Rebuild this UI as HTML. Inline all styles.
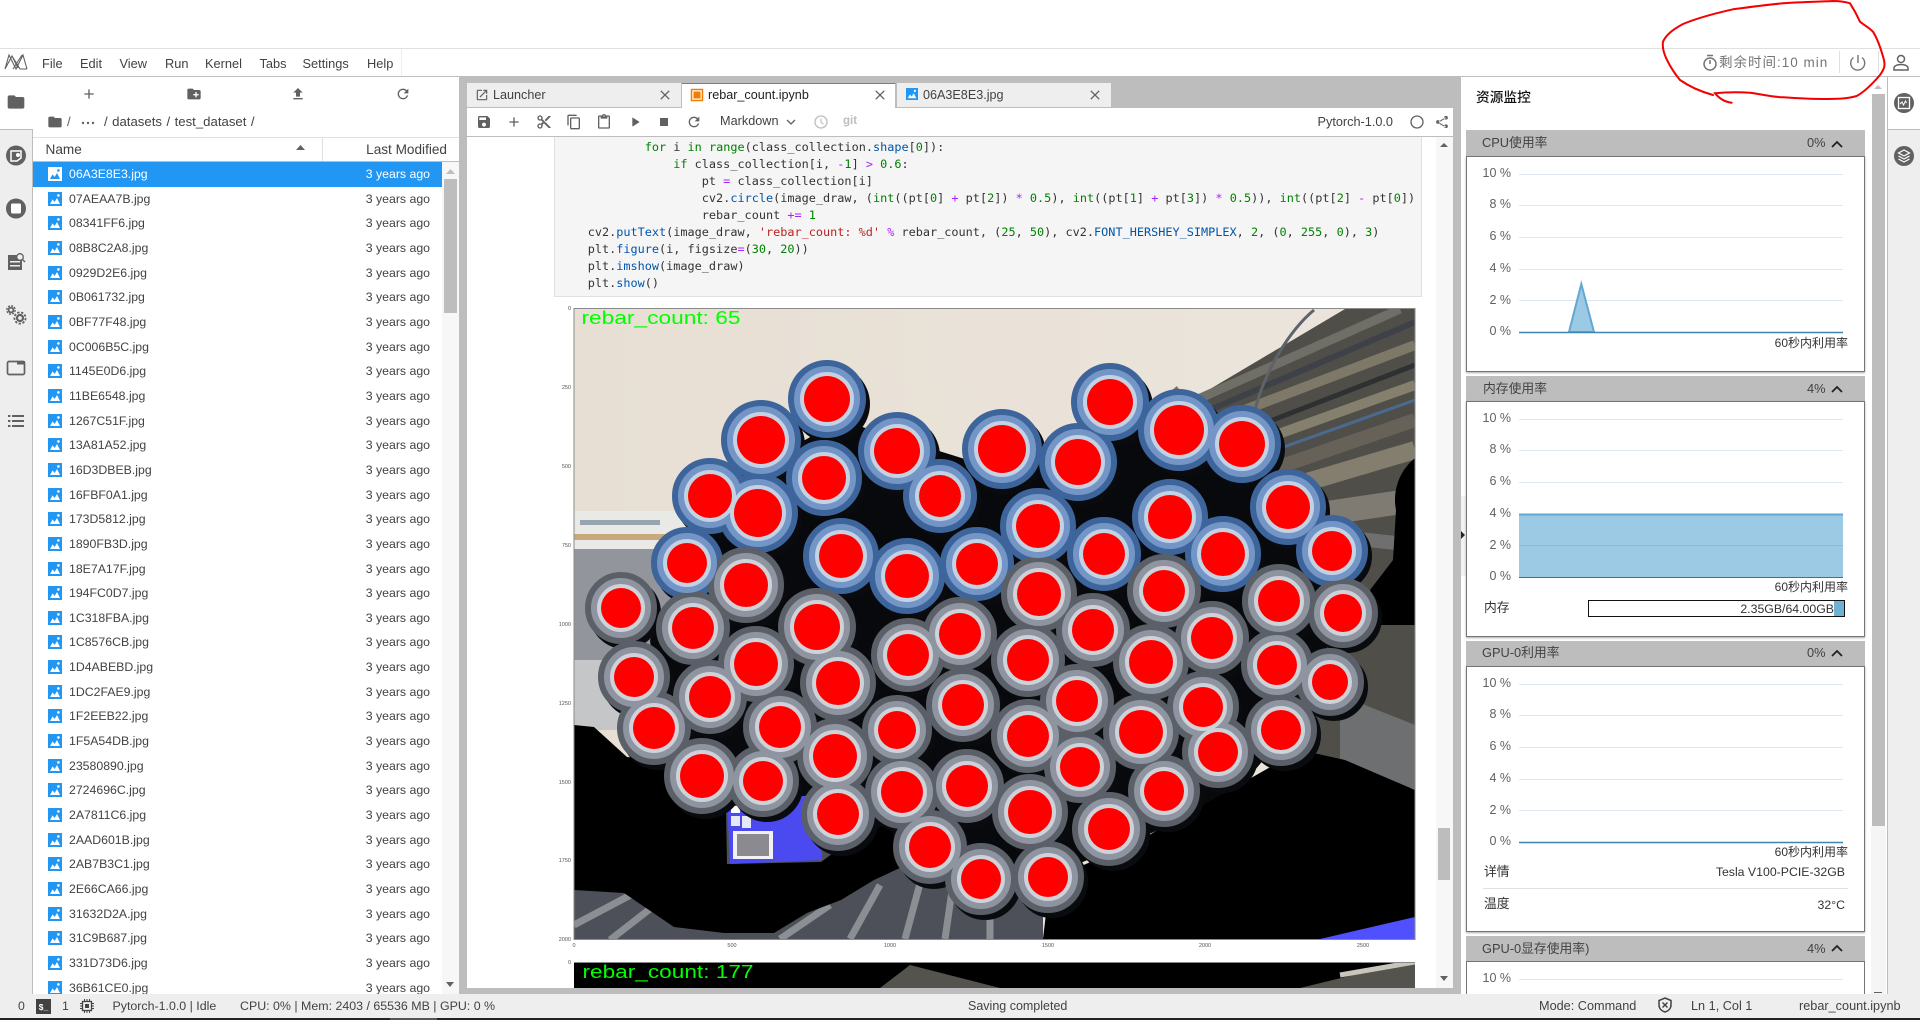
<!DOCTYPE html>
<html lang="en"><head><meta charset="utf-8"><title>rebar_count.ipynb</title>
<style>
html,body{margin:0;padding:0;background:#fff;overflow:hidden}
body{position:relative;width:1920px;height:1020px;overflow:hidden;font-family:"Liberation Sans","Noto Sans CJK SC",sans-serif;font-size:12.6px;color:#424242}
.a{position:absolute}
.t{position:absolute;white-space:nowrap;line-height:20px;height:20px}
.c{font-size:12.8px;color:#424242}
.y{font-size:12.5px;color:#616161;text-align:right;width:40px;left:1471px}
.u{font-size:12px;color:#333;right:72px}
#fl{position:absolute;left:33px;top:162px;width:409px;height:832px;overflow:hidden}
.r{position:relative;height:24.67px;line-height:24.67px;font-size:12.3px;color:#424242}
.r svg{position:absolute;left:15px;top:5px;width:14px;height:14px}
.r b{position:absolute;left:36px;font-weight:normal}
.r i{position:absolute;right:12px;font-style:normal;font-size:12.3px}
.s{background:#2196f3;color:#fff}
.s b,.s i{color:#fff}
#code{position:absolute;left:587.7px;top:139px;font:11.85px/17px "DejaVu Sans Mono","Liberation Mono",monospace;color:#333;white-space:pre;margin:0}
.k{color:#008000}.n{color:#008000}.o{color:#aa22ff}.f{color:#0055aa}.st{color:#ba2121}
</style></head><body>

<!-- top lines -->
<div class="a" style="left:0;top:48px;width:1920px;height:1px;background:#e0e0e0"></div>
<div class="a" style="left:0;top:76px;width:1920px;height:1px;background:#bdbdbd"></div>
<div class="a" style="left:401px;top:49px;width:1px;height:27px;background:#eee"></div>
<div class="a" style="left:1839px;top:51px;width:1px;height:22px;background:#e0e0e0"></div>
<div class="a" style="left:1878px;top:51px;width:1px;height:22px;background:#e0e0e0"></div>

<!-- left sidebar -->
<div class="a" style="left:0;top:129px;width:32px;height:865px;background:#eee;border-right:1px solid #bdbdbd;border-top:1px solid #bdbdbd"></div>
<!-- file browser chrome -->
<div class="a" style="left:33px;top:137px;width:426px;height:1px;background:#e0e0e0"></div>
<div class="a" style="left:33px;top:161px;width:426px;height:1px;background:#bdbdbd"></div>
<div class="a" style="left:322px;top:137px;width:1px;height:24px;background:#e0e0e0"></div>
<div class="a" style="left:442px;top:162px;width:17px;height:832px;background:#f7f7f7"></div>
<div class="a" style="left:444px;top:179px;width:13px;height:134px;background:#bdbdbd"></div>
<!-- splitters -->
<div class="a" style="left:459px;top:77px;width:1002px;height:6px;background:#bdbdbd"></div>
<div class="a" style="left:459px;top:77px;width:8px;height:917px;background:#bdbdbd"></div>
<div class="a" style="left:1453px;top:77px;width:8px;height:917px;background:#bdbdbd"></div>
<div class="a" style="left:467px;top:83px;width:986px;height:25px;background:#bdbdbd"></div>
<!-- tabs -->
<div class="a" style="left:467px;top:83px;width:214px;height:24px;background:#eee;border-right:1px solid #bdbdbd"></div>
<div class="a" style="left:682px;top:83px;width:214px;height:25px;background:#fff;border-top:1px solid #2196f3;box-sizing:border-box;border-right:1px solid #bdbdbd"></div>
<div class="a" style="left:897px;top:83px;width:214px;height:24px;background:#eee"></div>
<div class="a" style="left:467px;top:136px;width:986px;height:1px;background:#bdbdbd"></div>
<!-- code cell -->
<div class="a" style="left:554px;top:137px;width:866px;height:159px;background:#f5f5f5;border:1px solid #e0e0e0;border-top:0"></div>
<div class="a" style="left:1436px;top:137px;width:17px;height:851px;background:#f7f7f7"></div>
<div class="a" style="left:1438px;top:828px;width:12px;height:52px;background:#bdbdbd"></div>
<div class="a" style="left:467px;top:988px;width:986px;height:6px;background:#bdbdbd"></div>
<!-- right panel -->
<div class="a" style="left:1872px;top:94px;width:13px;height:732px;background:#bdbdbd"></div>
<div class="a" style="left:1871px;top:826px;width:15px;height:168px;background:#f5f5f5"></div>
<div class="a" style="left:1887px;top:77px;width:1px;height:917px;background:#bdbdbd"></div>
<div class="a" style="left:1888px;top:129px;width:32px;height:865px;background:#eee;border-top:1px solid #bdbdbd"></div>
<div class="a" style="left:1461px;top:496px;width:5px;height:80px;background:#f2f2f2"></div>

<!-- cards -->
<div class="a" style="left:1466px;top:130px;width:399px;height:26px;background:#bdbdbd"></div>
<div class="a" style="left:1466px;top:156px;width:397px;height:214px;background:#fff;border:1px solid #757575;box-shadow:0 1px 2px #aaa"></div>
<div class="a" style="left:1466px;top:376px;width:399px;height:26px;background:#bdbdbd"></div>
<div class="a" style="left:1466px;top:401px;width:397px;height:234px;background:#fff;border:1px solid #757575;box-shadow:0 1px 2px #aaa"></div>
<div class="a" style="left:1466px;top:641px;width:399px;height:25px;background:#bdbdbd"></div>
<div class="a" style="left:1466px;top:666px;width:397px;height:264px;background:#fff;border:1px solid #757575;box-shadow:0 1px 2px #aaa"></div>
<div class="a" style="left:1466px;top:936px;width:399px;height:26px;background:#bdbdbd"></div>
<div class="a" style="left:1466px;top:961px;width:397px;height:50px;background:#fff;border:1px solid #757575"></div>
<div class="a" style="left:1588px;top:600px;width:255px;height:15px;border:1px solid #111;background:#fff"></div>
<div class="a" style="left:1834px;top:601px;width:10px;height:15px;background:#6fb0d5"></div>
<div class="a" style="left:1483px;top:888px;width:365px;height:1px;background:#e0e0e0"></div>

<!-- overlay drawing -->
<svg class="a" style="left:0;top:0" width="1920" height="1020" viewBox="0 0 1920 1020" xmlns="http://www.w3.org/2000/svg">
<defs>
<clipPath id="ci"><rect x="574" y="309" width="841" height="630"/></clipPath>
<clipPath id="ci2"><rect x="574" y="963" width="841" height="25"/></clipPath>
<symbol id="folder" viewBox="0 0 24 24"><path d="M10 4H4c-1.1 0-2 .9-2 2v12c0 1.1.9 2 2 2h16c1.1 0 2-.9 2-2V8c0-1.1-.9-2-2-2h-8l-2-2z"/></symbol>
<symbol id="nf" viewBox="0 0 24 24"><path fill-rule="evenodd" d="M20 6h-8l-2-2H4c-1.1 0-2 .9-2 2v12c0 1.1.9 2 2 2h16c1.1 0 2-.9 2-2V8c0-1.1-.9-2-2-2zm-1 8h-3v3h-2v-3h-3v-2h3V9h2v3h3v2z"/></symbol>
<symbol id="up" viewBox="0 0 24 24"><path d="M9 16h6v-6h4l-7-7-7 7h4zm-4 2h14v2H5z"/></symbol>
<symbol id="ref" viewBox="0 0 24 24"><path d="M17.65 6.35A7.958 7.958 0 0012 4c-4.42 0-7.99 3.58-7.99 8s3.57 8 7.99 8c3.73 0 6.84-2.55 7.73-6h-2.08A5.99 5.99 0 0112 18c-3.31 0-6-2.69-6-6s2.69-6 6-6c1.66 0 3.14.69 4.22 1.78L13 11h7V4l-2.35 2.35z"/></symbol>
<symbol id="save" viewBox="0 0 24 24"><path d="M17 3H5a2 2 0 00-2 2v14c0 1.1.89 2 2 2h14c1.1 0 2-.9 2-2V7l-4-4zm-5 16c-1.66 0-3-1.34-3-3s1.34-3 3-3 3 1.34 3 3-1.34 3-3 3zm3-10H5V5h10v4z"/></symbol>
<symbol id="add" viewBox="0 0 24 24"><path d="M19 13h-6v6h-2v-6H5v-2h6V5h2v6h6v2z"/></symbol>
<symbol id="cut" viewBox="0 0 24 24"><path d="M9.64 7.64c.23-.5.36-1.05.36-1.64 0-2.21-1.79-4-4-4S2 3.79 2 6s1.79 4 4 4c.59 0 1.14-.13 1.64-.36L10 12l-2.36 2.36C7.14 14.13 6.59 14 6 14c-2.21 0-4 1.79-4 4s1.79 4 4 4 4-1.79 4-4c0-.59-.13-1.14-.36-1.64L12 14l7 7h3v-1L9.64 7.64zM6 8c-1.1 0-2-.89-2-2s.9-2 2-2 2 .89 2 2-.9 2-2 2zm0 12c-1.1 0-2-.89-2-2s.9-2 2-2 2 .89 2 2-.9 2-2 2zm6-7.5c-.28 0-.5-.22-.5-.5s.22-.5.5-.5.5.22.5.5-.22.5-.5.5zM19 3l-6 6 2 2 7-7V3z"/></symbol>
<symbol id="copy" viewBox="0 0 24 24"><path d="M16 1H4c-1.1 0-2 .9-2 2v14h2V3h12V1zm3 4H8c-1.1 0-2 .9-2 2v14c0 1.1.9 2 2 2h11c1.1 0 2-.9 2-2V7c0-1.1-.9-2-2-2zm0 16H8V7h11v14z"/></symbol>
<symbol id="paste" viewBox="0 0 24 24"><path d="M19 2h-4.18C14.4.84 13.3 0 12 0c-1.3 0-2.4.84-2.82 2H5c-1.1 0-2 .9-2 2v16c0 1.1.9 2 2 2h14c1.1 0 2-.9 2-2V4c0-1.1-.9-2-2-2zm-7 0c.55 0 1 .45 1 1s-.45 1-1 1-1-.45-1-1 .45-1 1-1zm7 18H5V4h2v3h10V4h2v16z"/></symbol>
<symbol id="run" viewBox="0 0 24 24"><path d="M8 5v14l11-7z"/></symbol>
<symbol id="stop" viewBox="0 0 24 24"><path d="M6 6h12v12H6z"/></symbol>
<symbol id="share" viewBox="0 0 24 24"><path d="M6 9.2a2.8 2.8 0 100 5.6 2.8 2.8 0 000-5.6zm12-6.4a2.8 2.8 0 100 5.6 2.8 2.8 0 000-5.6zm0 12.8a2.8 2.8 0 100 5.6 2.8 2.8 0 000-5.6zM7 11l10-6 .8 1.3-10 6zm.8 1.7l10 6-.8 1.3-10-6z"/></symbol>
<symbol id="close" viewBox="0 0 24 24"><path d="M19 6.4L17.6 5 12 10.6 6.4 5 5 6.4 10.6 12 5 17.6 6.4 19 12 13.4 17.6 19 19 17.6 13.4 12z"/></symbol>
<symbol id="launch" viewBox="0 0 24 24"><path d="M19 19H5V5h7V3H5a2 2 0 00-2 2v14a2 2 0 002 2h14c1.1 0 2-.9 2-2v-7h-2v7zM14 3v2h3.59l-9.83 9.83 1.41 1.41L19 6.41V10h2V3h-7z"/></symbol>
<symbol id="im" viewBox="0 0 14 14"><path fill="#2196f3" d="M0 0h14v14H0z"/><path fill="#fff" d="M2 12l2.6-4.6 2 2.6 2.4-4 3 6z"/><circle cx="10.4" cy="3.4" r="1.3" fill="#fff"/></symbol>
<g id="ca">
<circle cx="827" cy="399" r="23"/><circle cx="761" cy="440" r="24"/><circle cx="897" cy="451" r="23"/><circle cx="1002" cy="449" r="24"/><circle cx="1110" cy="402" r="23"/><circle cx="1179" cy="430" r="25"/><circle cx="1242" cy="444" r="23"/><circle cx="1078" cy="462" r="23"/><circle cx="824" cy="478" r="22"/><circle cx="710" cy="496" r="22"/><circle cx="940" cy="496" r="21"/><circle cx="758" cy="513" r="24"/><circle cx="1038" cy="526" r="22"/><circle cx="1170" cy="517" r="22"/><circle cx="1288" cy="507" r="22"/><circle cx="841" cy="556" r="22"/><circle cx="687" cy="563" r="20"/><circle cx="907" cy="576" r="22"/><circle cx="977" cy="564" r="21"/><circle cx="1104" cy="554" r="21"/><circle cx="1223" cy="554" r="22"/><circle cx="1332" cy="551" r="20"/>
</g>
<g id="cb">
<circle cx="746" cy="585" r="22"/><circle cx="1039" cy="594" r="22"/><circle cx="1164" cy="591" r="21"/><circle cx="1279" cy="601" r="21"/><circle cx="621" cy="608" r="20"/><circle cx="817" cy="627" r="23"/><circle cx="960" cy="634" r="21"/><circle cx="1093" cy="630" r="21"/><circle cx="1343" cy="613" r="19"/><circle cx="693" cy="628" r="21"/><circle cx="1212" cy="638" r="21"/><circle cx="908" cy="655" r="21"/><circle cx="756" cy="664" r="22"/><circle cx="1028" cy="660" r="21"/><circle cx="1151" cy="662" r="22"/><circle cx="1277" cy="665" r="20"/><circle cx="634" cy="677" r="20"/><circle cx="1330" cy="682" r="18"/><circle cx="838" cy="683" r="22"/><circle cx="710" cy="697" r="21"/><circle cx="1077" cy="701" r="21"/><circle cx="963" cy="705" r="21"/><circle cx="1203" cy="707" r="20"/><circle cx="654" cy="728" r="21"/><circle cx="780" cy="727" r="21"/><circle cx="897" cy="730" r="19"/><circle cx="1028" cy="736" r="21"/><circle cx="1141" cy="732" r="22"/><circle cx="1281" cy="730" r="20"/><circle cx="835" cy="756" r="22"/><circle cx="1218" cy="752" r="20"/><circle cx="702" cy="776" r="22"/><circle cx="763" cy="781" r="20"/><circle cx="1080" cy="767" r="20"/><circle cx="967" cy="786" r="21"/><circle cx="902" cy="792" r="21"/><circle cx="1164" cy="791" r="20"/><circle cx="1030" cy="812" r="22"/><circle cx="838" cy="814" r="21"/><circle cx="1109" cy="829" r="21"/><circle cx="930" cy="847" r="21"/><circle cx="1048" cy="877" r="20"/><circle cx="981" cy="879" r="20"/>
</g>
<linearGradient id="sand" x1="0" y1="0" x2="1" y2="0"><stop offset="0" stop-color="#e7dfd3"/><stop offset="1" stop-color="#ece5dd"/></linearGradient>
</defs>

<!-- image 1 -->
<g clip-path="url(#ci)">
<rect x="574" y="309" width="841" height="630" fill="url(#sand)"/>
<rect x="574" y="511" width="120" height="38" fill="#e9e9e6"/>
<rect x="574" y="534" width="110" height="6" fill="#c8a97e"/>
<rect x="580" y="520" width="80" height="5" fill="#98a4ae"/>
<rect x="574" y="549" width="200" height="180" fill="#92969c"/>
<path d="M574 660h120v70H574z" fill="#c4c6c8"/>
<!-- upper-right rebars -->
<path d="M1130 470L1200 395 1345 309H1415V760H1130z" fill="#4f4e49"/>
<g fill="none" stroke-linecap="butt">
<path d="M1196 400L1400 309" stroke="#6f6f68" stroke-width="9"/>
<path d="M1205 412L1415 322" stroke="#3e4248" stroke-width="6"/>
<path d="M1205 425L1415 345" stroke="#7d7868" stroke-width="10"/>
<path d="M1260 425L1415 365" stroke="#2f3032" stroke-width="5"/>
<path d="M1262 440L1415 385" stroke="#857f6e" stroke-width="10"/>
<path d="M1270 452L1415 400" stroke="#4a6a90" stroke-width="3"/>
<path d="M1270 470L1415 420" stroke="#666258" stroke-width="14"/>
<path d="M1280 490L1415 450" stroke="#837e6e" stroke-width="18"/>
<path d="M1280 520L1415 500" stroke="#7f7a72" stroke-width="24"/>
<path d="M1320 535L1415 545" stroke="#6f6f6f" stroke-width="14"/>
<path d="M1120 440L1180 390" stroke="#77746b" stroke-width="10"/>
<path d="M1255 410C1265 370 1290 330 1314 310" stroke="#5e636a" stroke-width="3"/>
</g>
<path d="M1415 458C1400 470 1392 490 1396 510L1393 560 1370 590 1376 625H1415z" fill="#000"/>
<path d="M1340 695L1415 725V790L1340 760z" fill="#6e6f70"/>
<!-- bottom rebars -->
<path d="M574 800H1043V939H574z" fill="#4d5058"/>
<g fill="none" stroke="#8b8f94" stroke-width="7"><path d="M574 925L640 890M610 940L655 905M780 939L830 905M850 939L880 885M905 939L925 865M945 939L955 870M990 939L990 900"/></g>
<!-- dark behind bars -->
<path d="M650 640L700 540 770 460 840 420 1000 470 1100 420 1240 460 1320 560 1330 680 1230 800 1040 880 900 850 740 780 660 730z" fill="#08090c"/>
<!-- black masks -->
<path d="M574 725L594 727 627 757 667 760 674 797 707 813 726 810 727 864 821 862 851 840 890 823 902 867 874 880 841 900 807 913 774 933 724 933 674 927 624 893 574 890z" fill="#000"/>
<path d="M1043 939L1050 880 1140 840 1230 790 1300 750 1345 760 1415 790V939z" fill="#000"/>
<path d="M574 730H590V760H574z" fill="#000"/>
<path d="M1320 939L1415 917V939z" fill="#5050ff"/>
<!-- label -->
<path d="M727 800L821 795 822 860 730 864z" fill="#4a4af0"/>
<rect x="733" y="831" width="40" height="28" fill="#f2f2f2"/>
<rect x="737" y="834" width="32" height="22" fill="#8a8a90"/>
<rect x="731" y="806" width="9" height="7" fill="#fff"/><rect x="731" y="816" width="9" height="10" fill="#e8e8f5"/><rect x="742" y="816" width="9" height="12" fill="#e8e8f5"/>
<!-- bar shells -->
<use href="#ca" fill="#0a0b0e" stroke="#0a0b0e" stroke-width="32" transform="translate(4,5)"/>
<use href="#cb" fill="#0a0b0e" stroke="#0a0b0e" stroke-width="32" transform="translate(4,5)"/>
<use href="#ca" fill="#3d659c" stroke="#3d659c" stroke-width="32"/>
<use href="#cb" fill="#5a5f68" stroke="#5a5f68" stroke-width="32"/>
<use href="#ca" fill="#7396c6" stroke="#7396c6" stroke-width="20"/>
<use href="#cb" fill="#8f95a0" stroke="#8f95a0" stroke-width="20"/>
<use href="#ca" fill="#c4d2e4" stroke="#c4d2e4" stroke-width="8"/>
<use href="#cb" fill="#cfd3d9" stroke="#cfd3d9" stroke-width="8"/>
<use href="#ca" fill="#f00" stroke="none"/>
<use href="#cb" fill="#f00" stroke="none"/>
<text x="581.5" y="324" font-family="Liberation Sans" font-size="18" fill="#00ff00" textLength="159" lengthAdjust="spacingAndGlyphs">rebar_count: 65</text>
</g>
<rect x="574" y="308.5" width="841" height="631" fill="none" stroke="#8a8a8a" stroke-width="1"/>
<g font-family="Liberation Sans" font-size="5.5" fill="#555">
<g text-anchor="end"><text x="571" y="310">0</text><text x="571" y="389">250</text><text x="571" y="468">500</text><text x="571" y="547">750</text><text x="571" y="626">1000</text><text x="571" y="705">1250</text><text x="571" y="784">1500</text><text x="571" y="862">1750</text><text x="571" y="941">2000</text><text x="571" y="964">0</text></g>
<g text-anchor="middle"><text x="574" y="947">0</text><text x="732" y="947">500</text><text x="890" y="947">1000</text><text x="1048" y="947">1500</text><text x="1205" y="947">2000</text><text x="1363" y="947">2500</text></g>
</g>
<!-- image 2 -->
<g clip-path="url(#ci2)">
<rect x="574" y="963" width="841" height="25" fill="#000"/>
<path d="M880 988L910 965 1000 988zM1300 988L1415 960V988z" fill="#55534e"/>
<path d="M1340 975L1415 962" stroke="#c8c5bb" stroke-width="5"/>
<text x="582.5" y="978" font-family="Liberation Sans" font-size="18" fill="#00ff00" textLength="171" lengthAdjust="spacingAndGlyphs">rebar_count: 177</text>
</g>
<rect x="574" y="962" width="841" height="1" fill="#888"/>

<!-- logo -->
<g fill="none" stroke="#616161" stroke-width="1.1"><path d="M5 69L12 56 20 69 27 69M5 69L9 55 16 69 23 55 27 69M12 56L18 68M13 69L22 55"/></g>

<!-- sidebar icons -->
<g fill="#616161">
<use href="#folder" x="6" y="92" width="20" height="20"/>
<circle cx="16" cy="155.5" r="10"/>
<path d="M11 151h10v7l-4 3h-6z" fill="none" stroke="#fff" stroke-width="1.5"/><circle cx="18" cy="155" r="2" fill="#fff"/>
<circle cx="16" cy="208.5" r="10"/><rect x="11" y="203.5" width="10" height="10" rx="1.5" fill="#fff"/>
<path d="M8 255h9v3h5v12H8z" fill="#616161"/><path d="M10 261h10v1.5H10zM10 265h10v1.5H10z" fill="#eee"/><circle cx="20" cy="257" r="3.3" fill="#eee" stroke="#616161" stroke-width="1.3"/><path d="M22 259l3 3" stroke="#616161" stroke-width="1.4"/>
</g>
<g fill="none" stroke="#616161">
<circle cx="11" cy="310" r="2.4" stroke-width="1.8"/><circle cx="11" cy="310" r="4.2" stroke-width="1.4" stroke-dasharray="2 1.3"/>
<circle cx="20" cy="318" r="3" stroke-width="2.2"/><circle cx="20" cy="318" r="5.6" stroke-width="1.8" stroke-dasharray="2.3 1.6"/>
</g>
<rect x="7.5" y="361.5" width="17" height="13" rx="1.5" fill="none" stroke="#616161" stroke-width="1.7"/><rect x="17" y="361" width="8" height="3.5" fill="#616161"/>
<g fill="#616161"><rect x="8" y="415" width="2.4" height="2"/><rect x="12" y="415" width="12" height="2"/><rect x="8" y="420" width="2.4" height="2"/><rect x="12" y="420" width="12" height="2"/><rect x="8" y="425" width="2.4" height="2"/><rect x="12" y="425" width="12" height="2"/></g>

<!-- file browser toolbar -->
<g fill="#616161">
<use href="#add" x="81" y="86" width="16" height="16"/>
<use href="#nf" x="186" y="86" width="16" height="16"/>
<use href="#up" x="290" y="86" width="16" height="16"/>
<use href="#ref" x="395" y="86" width="16" height="16"/>
<use href="#folder" x="47" y="114" width="16" height="16"/>
<circle cx="83" cy="123" r="1.2"/><circle cx="88" cy="123" r="1.2"/><circle cx="93" cy="123" r="1.2"/>
<path d="M446 174l4.5-5 4.5 5z" fill="#bdbdbd"/><path d="M446 982l4 5 4-5z"/>
<path d="M1440 147l4-4 4 4z"/><path d="M1440 976l4 5 4-5z"/>
<path d="M1874 89l4-4 4 4z" fill="#bdbdbd"/><path d="M1874 993h8v-1h-8z"/>
</g>

<!-- tab icons -->
<g fill="#616161">
<use href="#launch" x="475" y="88" width="14" height="14"/>
<use href="#close" x="657" y="87" width="16" height="16"/>
<use href="#close" x="872" y="87" width="16" height="16"/>
<use href="#close" x="1087" y="87" width="16" height="16"/>
<rect x="691.5" y="89.5" width="11" height="11" fill="#fff" stroke="#f57c00" stroke-width="1.5"/><rect x="693.5" y="91.5" width="7" height="7" fill="#f57c00"/>
</g>
<use href="#im" x="906" y="88" width="12" height="12"/>

<!-- notebook toolbar -->
<g fill="#616161">
<use href="#save" x="476" y="114" width="16" height="16"/>
<use href="#add" x="506" y="114" width="16" height="16"/>
<use href="#cut" x="536" y="114" width="16" height="16"/>
<use href="#copy" x="566" y="114" width="16" height="16"/>
<use href="#paste" x="596" y="114" width="16" height="16"/>
<use href="#run" x="627" y="114" width="16" height="16"/>
<use href="#stop" x="656" y="114" width="16" height="16"/>
<use href="#ref" x="686" y="114" width="16" height="16"/>
<use href="#share" x="1434" y="114" width="16" height="16"/>
</g>
<path d="M787 120l4 4 4-4" fill="none" stroke="#616161" stroke-width="1.3"/>
<circle cx="821" cy="122" r="6" fill="none" stroke="#bdbdbd" stroke-width="1.3"/><path d="M821 118.5v4l2.5 1.5" fill="none" stroke="#bdbdbd" stroke-width="1.1"/>
<circle cx="1417" cy="122" r="6" fill="none" stroke="#616161" stroke-width="1.3"/>

<!-- header right icons -->
<circle cx="1710" cy="64" r="6" fill="none" stroke="#757575" stroke-width="1.5"/><path d="M1707 55.5h6M1710 60v4" stroke="#757575" stroke-width="1.5"/>
<path d="M1853.5 57.5a7 7 0 108.4 0M1858 55v8" fill="none" stroke="#757575" stroke-width="1.4"/>
<circle cx="1901" cy="59" r="3.5" fill="none" stroke="#616161" stroke-width="1.5"/><path d="M1894 70v-2c0-2 3-3.5 7-3.5s7 1.5 7 3.5v2z" fill="none" stroke="#616161" stroke-width="1.5"/>

<!-- right sidebar icons -->
<circle cx="1904" cy="103" r="10" fill="#616161"/><rect x="1898.5" y="97.5" width="11" height="11" fill="none" stroke="#fff" stroke-width="1.3"/><path d="M1900 104l2-2 1.5 3 2-4 1 2" fill="none" stroke="#fff" stroke-width="1"/>
<circle cx="1904" cy="156" r="10" fill="#616161"/><path d="M1904 150l5.5 3-5.5 3-5.5-3zM1898.5 156l5.5 3 5.5-3M1898.5 159l5.5 3 5.5-3" fill="none" stroke="#fff" stroke-width="1.2"/>
<path d="M1461 531l4 4-4 4z" fill="#222"/>

<!-- charts -->
<g stroke="#e0e6f1" stroke-width="1">
<path d="M1519 174.5h324M1519 205.5h324M1519 237.5h324M1519 269.5h324M1519 300.5h324"/>
<path d="M1519 419.5h324M1519 450.5h324M1519 482.5h324"/>
<path d="M1519 684.5h324M1519 715.5h324M1519 747.5h324M1519 779.5h324M1519 810.5h324"/>
<path d="M1519 979.5h324"/>
</g>
<path d="M1569 332L1581.3 284 1594 332z" fill="#9ccae4" stroke="#62a8d2" stroke-width="2"/>
<path d="M1519 332.5h324M1519 842.5h324" stroke="#3d86b0" stroke-width="1.5"/>
<rect x="1519" y="514" width="324" height="63" fill="#9ccae4"/>
<path d="M1519 514.5h324" stroke="#62a8d2" stroke-width="2"/><path d="M1519 545.5h324" stroke="#8bbbd7"/>
<path d="M1519 577.5h324" stroke="#666" stroke-width="1"/>
<g fill="none" stroke="#222" stroke-width="1.8">
<path d="M1832 147l5-5 5 5M1832 392l5-5 5 5M1832 656l5-5 5 5M1832 951l5-5 5 5"/>
</g>

<!-- scribble -->
<path d="M1731.7 102.7C1724 102 1719 98 1715 93.3C1727 92 1740 92 1750 92.7C1760 94 1772 97 1783 97.3C1797 98.3 1810 99 1823 99C1835 99 1847 99 1856.7 96C1866 91 1874 82 1880 75C1885 68 1885 65 1884 60C1881 49 1877 38 1873 31.7C1868 27 1864 25 1860 21.7C1857 15 1853 8 1850 3.3C1846 2 1840 1 1833 1C1815 2 1800 2 1783 3.3C1765 5 1750 7 1733 9.3C1712 14 1695 19 1683 24C1672 30 1666 35 1663 41.7C1662 48 1664 54 1667 60C1671 68 1675 74 1680 80C1690 87 1702 92 1713 95" fill="none" stroke="#f50000" stroke-width="2" stroke-linecap="round"/>
</svg>

<!-- menu text -->
<span class="t" style="left:42px;top:53.5px;font-size:12.8px">File</span>
<span class="t" style="left:80px;top:53.5px;font-size:12.8px">Edit</span>
<span class="t" style="left:119.5px;top:53.5px;font-size:12.8px">View</span>
<span class="t" style="left:165px;top:53.5px;font-size:12.8px">Run</span>
<span class="t" style="left:205px;top:53.5px;font-size:12.8px">Kernel</span>
<span class="t" style="left:259.5px;top:53.5px;font-size:12.8px">Tabs</span>
<span class="t" style="left:302.5px;top:53.5px;font-size:12.8px">Settings</span>
<span class="t" style="left:367px;top:53.5px;font-size:12.8px">Help</span>
<span class="t" style="left:1719px;top:53px;font-size:13.5px;letter-spacing:1px;color:#757575">剩余时间:10 min</span>

<!-- breadcrumbs & header -->
<span class="t" style="left:67px;top:112px;font-size:13.2px;color:#616161">/</span>
<span class="t" style="left:104px;top:112px;font-size:13.2px;word-spacing:.8px">/ datasets / test_dataset /</span>
<span class="t" style="left:45.5px;top:139.5px;font-size:13.6px">Name</span>
<span class="t" style="right:1473px;top:139.5px;font-size:13.6px">Last Modified</span>
<svg class="a" style="left:296px;top:144px" width="10" height="8"><path d="M0 6l4.5-5 4.5 5z" fill="#616161"/></svg>

<!-- file list -->
<div id="fl">
<div class="r s"><svg viewBox="0 0 14 14"><path fill="#fff" d="M0 0h14v14H0z"/><path fill="#2196f3" d="M2 12l2.6-4.6 2 2.6 2.4-4 3 6z"/><circle cx="10.4" cy="3.4" r="1.3" fill="#2196f3"/></svg><b>06A3E8E3.jpg</b><i>3 years ago</i></div>
<div class="r"><svg><use href="#im" width="14" height="14"/></svg><b>07AEAA7B.jpg</b><i>3 years ago</i></div>
<div class="r"><svg><use href="#im" width="14" height="14"/></svg><b>08341FF6.jpg</b><i>3 years ago</i></div>
<div class="r"><svg><use href="#im" width="14" height="14"/></svg><b>08B8C2A8.jpg</b><i>3 years ago</i></div>
<div class="r"><svg><use href="#im" width="14" height="14"/></svg><b>0929D2E6.jpg</b><i>3 years ago</i></div>
<div class="r"><svg><use href="#im" width="14" height="14"/></svg><b>0B061732.jpg</b><i>3 years ago</i></div>
<div class="r"><svg><use href="#im" width="14" height="14"/></svg><b>0BF77F48.jpg</b><i>3 years ago</i></div>
<div class="r"><svg><use href="#im" width="14" height="14"/></svg><b>0C006B5C.jpg</b><i>3 years ago</i></div>
<div class="r"><svg><use href="#im" width="14" height="14"/></svg><b>1145E0D6.jpg</b><i>3 years ago</i></div>
<div class="r"><svg><use href="#im" width="14" height="14"/></svg><b>11BE6548.jpg</b><i>3 years ago</i></div>
<div class="r"><svg><use href="#im" width="14" height="14"/></svg><b>1267C51F.jpg</b><i>3 years ago</i></div>
<div class="r"><svg><use href="#im" width="14" height="14"/></svg><b>13A81A52.jpg</b><i>3 years ago</i></div>
<div class="r"><svg><use href="#im" width="14" height="14"/></svg><b>16D3DBEB.jpg</b><i>3 years ago</i></div>
<div class="r"><svg><use href="#im" width="14" height="14"/></svg><b>16FBF0A1.jpg</b><i>3 years ago</i></div>
<div class="r"><svg><use href="#im" width="14" height="14"/></svg><b>173D5812.jpg</b><i>3 years ago</i></div>
<div class="r"><svg><use href="#im" width="14" height="14"/></svg><b>1890FB3D.jpg</b><i>3 years ago</i></div>
<div class="r"><svg><use href="#im" width="14" height="14"/></svg><b>18E7A17F.jpg</b><i>3 years ago</i></div>
<div class="r"><svg><use href="#im" width="14" height="14"/></svg><b>194FC0D7.jpg</b><i>3 years ago</i></div>
<div class="r"><svg><use href="#im" width="14" height="14"/></svg><b>1C318FBA.jpg</b><i>3 years ago</i></div>
<div class="r"><svg><use href="#im" width="14" height="14"/></svg><b>1C8576CB.jpg</b><i>3 years ago</i></div>
<div class="r"><svg><use href="#im" width="14" height="14"/></svg><b>1D4ABEBD.jpg</b><i>3 years ago</i></div>
<div class="r"><svg><use href="#im" width="14" height="14"/></svg><b>1DC2FAE9.jpg</b><i>3 years ago</i></div>
<div class="r"><svg><use href="#im" width="14" height="14"/></svg><b>1F2EEB22.jpg</b><i>3 years ago</i></div>
<div class="r"><svg><use href="#im" width="14" height="14"/></svg><b>1F5A54DB.jpg</b><i>3 years ago</i></div>
<div class="r"><svg><use href="#im" width="14" height="14"/></svg><b>23580890.jpg</b><i>3 years ago</i></div>
<div class="r"><svg><use href="#im" width="14" height="14"/></svg><b>2724696C.jpg</b><i>3 years ago</i></div>
<div class="r"><svg><use href="#im" width="14" height="14"/></svg><b>2A7811C6.jpg</b><i>3 years ago</i></div>
<div class="r"><svg><use href="#im" width="14" height="14"/></svg><b>2AAD601B.jpg</b><i>3 years ago</i></div>
<div class="r"><svg><use href="#im" width="14" height="14"/></svg><b>2AB7B3C1.jpg</b><i>3 years ago</i></div>
<div class="r"><svg><use href="#im" width="14" height="14"/></svg><b>2E66CA66.jpg</b><i>3 years ago</i></div>
<div class="r"><svg><use href="#im" width="14" height="14"/></svg><b>31632D2A.jpg</b><i>3 years ago</i></div>
<div class="r"><svg><use href="#im" width="14" height="14"/></svg><b>31C9B687.jpg</b><i>3 years ago</i></div>
<div class="r"><svg><use href="#im" width="14" height="14"/></svg><b>331D73D6.jpg</b><i>3 years ago</i></div>
<div class="r"><svg><use href="#im" width="14" height="14"/></svg><b>36B61CE0.jpg</b><i>3 years ago</i></div>
</div>

<!-- tabs text -->
<span class="t" style="left:493px;top:85px">Launcher</span>
<span class="t" style="left:708px;top:85px;color:#212121">rebar_count.ipynb</span>
<span class="t" style="left:923px;top:85px">06A3E8E3.jpg</span>
<span class="t" style="left:720px;top:111px;font-size:12.7px">Markdown</span>
<span class="t" style="left:843px;top:111px;font-size:11.5px;color:#bdbdbd;font-weight:bold">git</span>
<span class="t" style="right:527px;top:112px;font-size:12.7px">Pytorch-1.0.0</span>

<!-- code -->
<pre id="code">        <span class="k">for</span> i <span class="k">in</span> <span class="k">range</span>(class_collection.<span class="f">shape</span>[<span class="n">0</span>]):
            <span class="k">if</span> class_collection[i, <span class="o">-</span><span class="n">1</span>] <span class="o">&gt;</span> <span class="n">0.6</span>:
                pt <span class="o">=</span> class_collection[i]
                cv2.<span class="f">circle</span>(image_draw, (<span class="k">int</span>((pt[<span class="n">0</span>] <span class="o">+</span> pt[<span class="n">2</span>]) <span class="o">*</span> <span class="n">0.5</span>), <span class="k">int</span>((pt[<span class="n">1</span>] <span class="o">+</span> pt[<span class="n">3</span>]) <span class="o">*</span> <span class="n">0.5</span>)), <span class="k">int</span>((pt[<span class="n">2</span>] <span class="o">-</span> pt[<span class="n">0</span>])
                rebar_count <span class="o">+=</span> <span class="n">1</span>
cv2.<span class="f">putText</span>(image_draw, <span class="st">'rebar_count: %d'</span> <span class="o">%</span> rebar_count, (<span class="n">25</span>, <span class="n">50</span>), cv2.<span class="f">FONT_HERSHEY_SIMPLEX</span>, <span class="n">2</span>, (<span class="n">0</span>, <span class="n">255</span>, <span class="n">0</span>), <span class="n">3</span>)
plt.<span class="f">figure</span>(i, figsize<span class="o">=</span>(<span class="n">30</span>, <span class="n">20</span>))
plt.<span class="f">imshow</span>(image_draw)
plt.<span class="f">show</span>()</pre>

<!-- right panel text -->
<span class="t" style="left:1476px;top:88px;font-size:13.7px;color:#111;font-weight:500">资源监控</span>
<span class="t c" style="left:1482px;top:133px">CPU使用率</span><span class="t c" style="left:1807px;top:133px">0%</span>
<span class="t c" style="left:1483px;top:379px">内存使用率</span><span class="t c" style="left:1807px;top:379px">4%</span>
<span class="t c" style="left:1482px;top:643px">GPU-0利用率</span><span class="t c" style="left:1807px;top:643px">0%</span>
<span class="t c" style="left:1482px;top:939px">GPU-0显存使用率)</span><span class="t c" style="left:1807px;top:939px">4%</span>

<span class="t y" style="top:162.5px">10 %</span><span class="t y" style="top:194px">8 %</span><span class="t y" style="top:225.5px">6 %</span><span class="t y" style="top:257.5px">4 %</span><span class="t y" style="top:289.5px">2 %</span><span class="t y" style="top:320.5px">0 %</span>
<span class="t y" style="top:407.5px">10 %</span><span class="t y" style="top:439px">8 %</span><span class="t y" style="top:470.5px">6 %</span><span class="t y" style="top:502.5px">4 %</span><span class="t y" style="top:534.5px">2 %</span><span class="t y" style="top:565.5px">0 %</span>
<span class="t y" style="top:672.5px">10 %</span><span class="t y" style="top:704px">8 %</span><span class="t y" style="top:735.5px">6 %</span><span class="t y" style="top:767.5px">4 %</span><span class="t y" style="top:799.5px">2 %</span><span class="t y" style="top:830.5px">0 %</span>
<span class="t y" style="top:967.5px">10 %</span>

<span class="t u" style="top:332.5px">60秒内利用率</span>
<span class="t u" style="top:577px">60秒内利用率</span>
<span class="t u" style="top:842px">60秒内利用率</span>
<span class="t" style="left:1484px;top:598px;font-size:12.8px;color:#333">内存</span>
<span class="t" style="right:86px;top:598.5px;font-size:12.3px;color:#333">2.35GB/64.00GB</span>
<span class="t" style="left:1484px;top:862px;font-size:12.8px;color:#333">详情</span>
<span class="t" style="right:75px;top:862px;font-size:12.3px;color:#333">Tesla V100-PCIE-32GB</span>
<span class="t" style="left:1484px;top:894px;font-size:12.8px;color:#333">温度</span>
<span class="t" style="right:75px;top:894.5px;font-size:12.3px;color:#333">32°C</span>

<!-- status bar -->
<div class="a" style="left:0;top:994px;width:1920px;height:24px;background:#eee"></div>
<div class="a" style="left:0;top:1018px;width:1920px;height:2px;background:#222"></div>
<div class="a" style="left:390px;top:1018px;width:47px;height:2px;background:#555"></div>
<span class="t" style="left:18px;top:996px;font-size:12.3px">0</span>
<div class="a" style="left:36px;top:999px;width:15px;height:15px;background:#424242;color:#fff;font-size:8.5px;line-height:17px;text-align:center;font-weight:bold">$_</div>
<span class="t" style="left:62px;top:996px;font-size:12.3px">1</span>
<svg class="a" style="left:79px;top:998px" width="16" height="16" viewBox="0 0 16 16"><rect x="3.5" y="3.5" width="9" height="9" fill="none" stroke="#424242" stroke-width="1.3"/><rect x="6" y="6" width="4" height="4" fill="#424242"/><path d="M1 5.5h2M1 8h2M1 10.5h2M13 5.5h2M13 8h2M13 10.5h2M5.5 1v2M8 1v2M10.5 1v2M5.5 13v2M8 13v2M10.5 13v2" stroke="#424242"/></svg>
<span class="t" style="left:112.5px;top:996px;font-size:12.4px">Pytorch-1.0.0 | Idle</span>
<span class="t" style="left:240px;top:996px;font-size:12.4px">CPU: 0% | Mem: 2403 / 65536 MB | GPU: 0 %</span>
<span class="t" style="left:968px;top:996px;font-size:12.5px">Saving completed</span>
<span class="t" style="left:1539px;top:996px;font-size:12.7px">Mode: Command</span>
<svg class="a" style="left:1657px;top:997px" width="16" height="16" viewBox="0 0 16 16"><path d="M8 1l6 2.5v4.5c0 3.5-2.7 6-6 7-3.3-1-6-3.5-6-7V3.5z" fill="none" stroke="#424242" stroke-width="1.5"/><path d="M5.5 5.5l5 5M10.5 5.5l-5 5" stroke="#424242" stroke-width="1.4"/></svg>
<span class="t" style="left:1691px;top:996px;font-size:12.7px">Ln 1, Col 1</span>
<span class="t" style="left:1799px;top:996px;font-size:12.7px">rebar_count.ipynb</span>
</body></html>
